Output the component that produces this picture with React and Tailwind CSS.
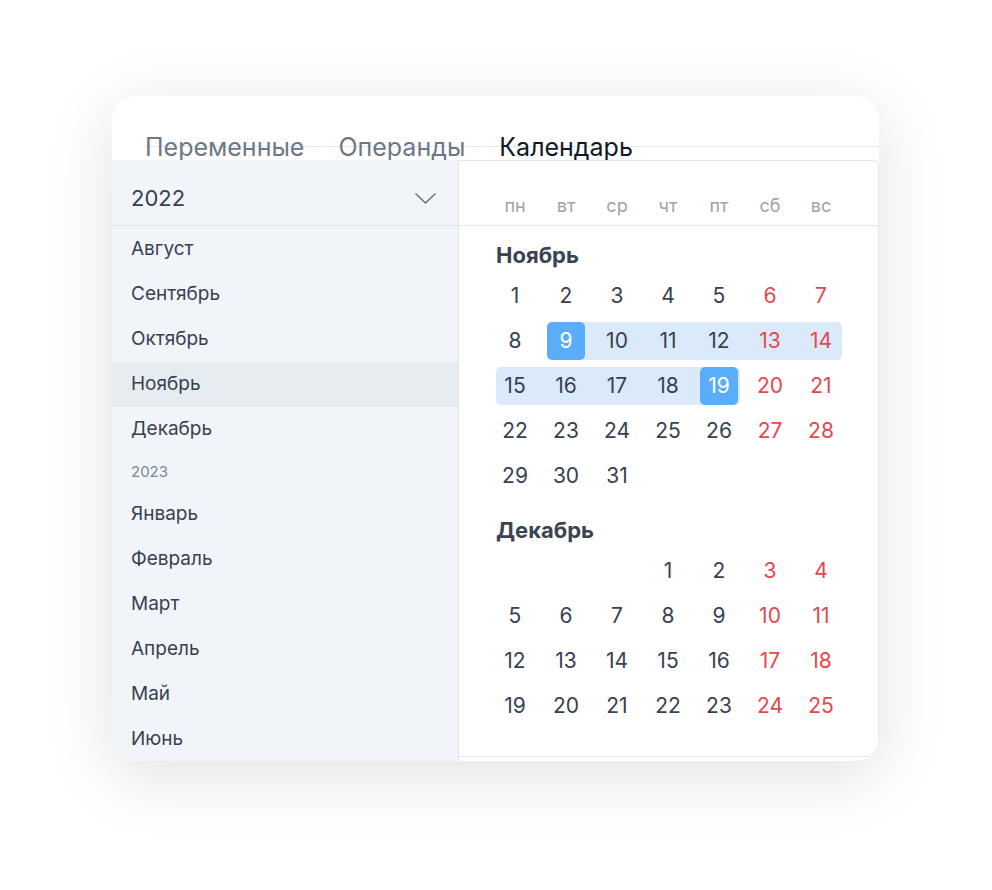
import { useState } from "react";

const months2022 = ["Август", "Сентябрь", "Октябрь", "Ноябрь", "Декабрь"];
const months2023 = ["Январь", "Февраль", "Март", "Апрель", "Май", "Июнь"];
const weekdays = ["пн", "вт", "ср", "чт", "пт", "сб", "вс"];

// each week: 7 days (null = empty), band = grid columns of the selected range
const november = [
  { days: [1, 2, 3, 4, 5, 6, 7] },
  { days: [8, 9, 10, 11, 12, 13, 14], band: "col-start-2 col-end-8" },
  { days: [15, 16, 17, 18, 19, 20, 21], band: "col-start-1 col-end-6" },
  { days: [22, 23, 24, 25, 26, 27, 28] },
  { days: [29, 30, 31, null, null, null, null] },
];

const december = [
  { days: [null, null, null, 1, 2, 3, 4] },
  { days: [5, 6, 7, 8, 9, 10, 11] },
  { days: [12, 13, 14, 15, 16, 17, 18] },
  { days: [19, 20, 21, 22, 23, 24, 25] },
];

const Week = ({ week, selected = [] }) => (
  <div className="grid grid-cols-[repeat(7,38px)] gap-x-[13px] h-[38px]">
    {week.band && (
      <div className={`${week.band} row-start-1 bg-[#dbeafa] rounded-[5px] -mr-[2px]`} />
    )}
    {week.days.map((d, i) => {
      if (d === null) return <div key={i} className="row-start-1" style={{ gridColumnStart: i + 1 }} />;
      const isSel = selected.includes(d);
      const weekend = i >= 5;
      return (
        <div
          key={i}
          style={{ gridColumnStart: i + 1 }}
          className={`row-start-1 h-[38px] flex items-center justify-center text-[21px] rounded-[5px] ${
            isSel ? "bg-[#5aadfb] text-white" : weekend ? "text-[#e5484d]" : "text-[#374151]"
          }`}
        >
          {d}
        </div>
      );
    })}
  </div>
);

const MonthBlock = ({ title, weeks, selected }) => (
  <div>
    <div className="text-[22px] leading-[28px] font-bold text-[#3b4351]">{title}</div>
    <div className="mt-[8px] flex flex-col gap-y-[7px]">
      {weeks.map((w, i) => (
        <Week key={i} week={w} selected={selected} />
      ))}
    </div>
  </div>
);

const App = () => {
  const [activeMonth, setActiveMonth] = useState("Ноябрь");
  const tabs = ["Переменные", "Операнды", "Календарь"];

  return (
    <div
      className="w-[992px] h-[890px] bg-white pt-[96px] pl-[112px]"
      style={{ fontFamily: "Inter, 'Noto Sans', sans-serif" }}
    >
      <div className="w-[767px] h-[665px] bg-white rounded-[24px] shadow-[0_14px_70px_rgba(0,0,0,0.12)] overflow-hidden flex flex-col">
        {/* Tabs */}
        <div className="ml-[33px] h-[51px] border-b border-[#e5e9ef] flex gap-[34px] shrink-0">
          {tabs.map((t) => (
            <div
              key={t}
              className={`pt-[39px] text-[25px] leading-[24px] whitespace-nowrap ${
                t === "Календарь" ? "text-[#111827]" : "text-[#6b7888]"
              }`}
            >
              {t}
            </div>
          ))}
        </div>

        {/* Body */}
        <div className="mt-[13px] flex flex-1 min-h-0">
          {/* Left: months */}
          <div className="w-[347px] shrink-0 bg-[#f1f5f9] border-r border-[#e4e9ef] flex flex-col">
            <div className="h-[66px] border-b border-[#e2e8f0] flex items-center justify-between pl-[19px] pr-[22px] pt-[12px] shrink-0">
              <span className="text-[22px] text-[#374151]">2022</span>
              <svg width="21" height="11" viewBox="0 0 21 11" fill="none">
                <path d="M1 1l9.5 9 9.5-9" stroke="#6b7280" strokeWidth="1.6" strokeLinecap="round" strokeLinejoin="round" />
              </svg>
            </div>
            <div className="pt-[1px] flex flex-col">
              {months2022.map((m) => (
                <div
                  key={m}
                  onClick={() => setActiveMonth(m)}
                  className={`h-[45px] shrink-0 flex items-center pl-[19px] text-[19px] text-[#374151] ${
                    activeMonth === m ? "bg-[#e7ecf1]" : ""
                  }`}
                >
                  {m}
                </div>
              ))}
              <div className="h-[40px] shrink-0 flex items-center pl-[19px] text-[15px] text-[#7c8796]">2023</div>
              {months2023.map((m) => (
                <div
                  key={m}
                  onClick={() => setActiveMonth(m)}
                  className={`h-[45px] shrink-0 flex items-center pl-[19px] text-[19px] text-[#374151] ${
                    activeMonth === m ? "bg-[#e7ecf1]" : ""
                  }`}
                >
                  {m}
                </div>
              ))}
            </div>
          </div>

          {/* Right: calendar */}
          <div className="flex-1 mb-[4px] border border-l-0 border-[#e4e9ef] rounded-tr-[6px] flex flex-col">
            <div className="h-[65px] border-b border-[#e2e8f0] px-[37px] flex items-end pb-[7px] shrink-0">
              <div className="grid grid-cols-[repeat(7,38px)] gap-x-[13px]">
                {weekdays.map((w) => (
                  <div key={w} className="text-center text-[18px] leading-[24px] text-[#9aa3af]">
                    {w}
                  </div>
                ))}
              </div>
            </div>
            <div className="px-[37px] pt-[15px] flex flex-col gap-[21px]">
              <MonthBlock title="Ноябрь" weeks={november} selected={[9, 19]} />
              <MonthBlock title="Декабрь" weeks={december} selected={[]} />
            </div>
          </div>
        </div>
      </div>
    </div>
  );
};

export default App;
